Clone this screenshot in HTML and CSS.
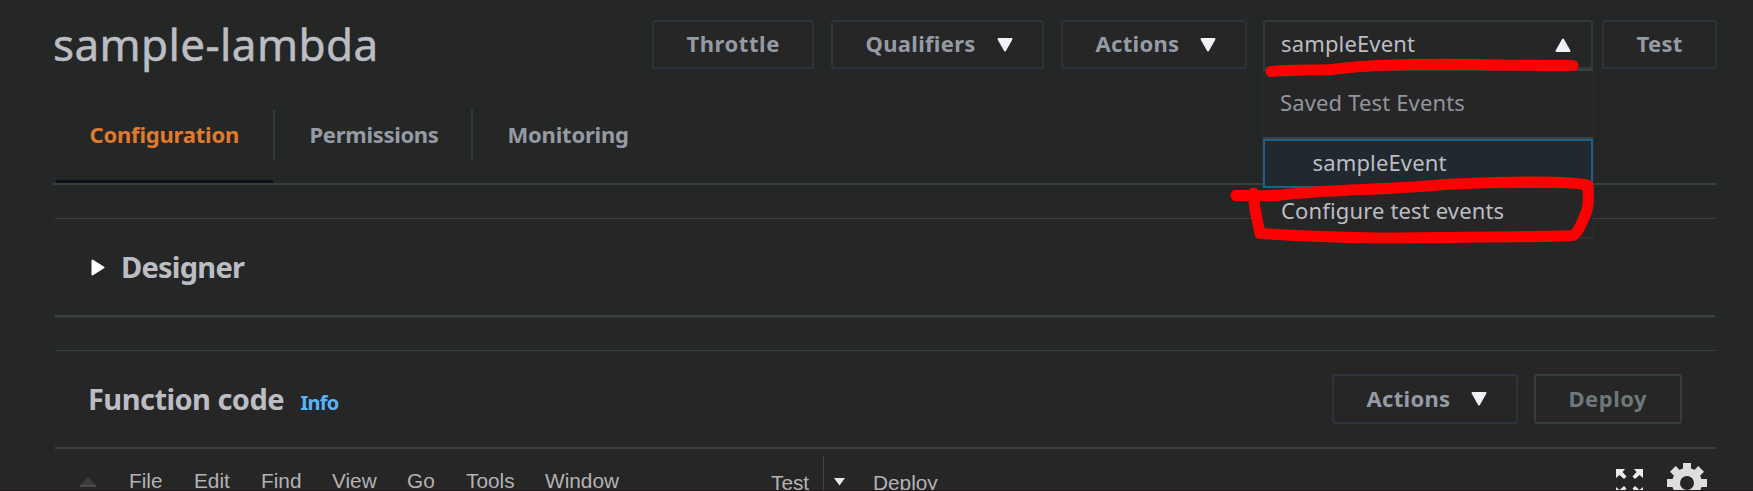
FILE: index.html
```html
<!DOCTYPE html>
<html lang="en">
<head>
<meta charset="utf-8">
<title>sample-lambda</title>
<link rel="stylesheet" href="styles.css">
</head>
<body>
<div class="page">
  <header class="header">
    <h1 class="title">sample-lambda</h1>
    <div class="actions">
      <button class="btn throttle"><span>Throttle</span></button>
      <button class="btn qualifiers"><span>Qualifiers</span><svg class="caret" viewBox="0 0 16 14"><path d="M1.500 1h13L8 12.500z"/></svg></button>
      <button class="btn menu"><span>Actions</span><svg class="caret" viewBox="0 0 16 14"><path d="M1.500 1h13L8 12.500z"/></svg></button>
      <div class="select">
        <span class="value">sampleEvent</span>
        <svg class="caret" viewBox="0 0 16 14"><path d="M1.500 13h13L8 1.500z"/></svg>
        <div class="dropdown">
          <div class="group"><span>Saved Test Events</span></div>
          <div class="option selected"><span>sampleEvent</span></div>
          <div class="option"><span>Configure test events</span></div>
        </div>
      </div>
      <button class="btn test"><span>Test</span></button>
    </div>
  </header>
  <nav class="tabs">
    <a class="tab active"><span>Configuration</span></a>
    <a class="tab permissions"><span>Permissions</span></a>
    <a class="tab monitoring"><span>Monitoring</span></a>
  </nav>
  <section class="panel designer">
    <svg class="arrow" viewBox="0 0 14 17"><path d="M1.500 1.500v14L12.500 8.500z"/></svg>
    <h2>Designer</h2>
  </section>
  <section class="panel code">
    <div class="code-head">
      <h2>Function code</h2>
      <a class="info">Info</a>
      <button class="btn menu code-menu"><span>Actions</span><svg class="caret" viewBox="0 0 16 14"><path d="M1.500 1h13L8 12.500z"/></svg></button>
      <button class="btn deploy"><span>Deploy</span></button>
    </div>
    <div class="ide">
      <svg class="collapse" viewBox="0 0 16 10"><path fill="#3c3c3c" d="M8 0l8 8H0z"/><path fill="#4c4c4c" d="M0 8h16v2H0z"/></svg>
      <div class="ide-menu"><span class="m-file">File</span><span class="m-edit">Edit</span><span class="m-find">Find</span><span class="m-view">View</span><span class="m-go">Go</span><span class="m-tools">Tools</span><span>Window</span></div>
      <div class="ide-run"><span class="run-test">Test</span><svg class="run-caret" viewBox="0 0 12 8"><path d="M0 0h11L5.500 7.500z"/></svg><span>Deploy</span></div>
      <svg class="expand" viewBox="0 0 27 27"><g id="c"><path d="M0 0h9L6.500 3l4 4.500-2.500 2.500-4.500-4L0 9z"/></g><use href="#c" transform="matrix(-1 0 0 1 27 0)"/><use href="#c" transform="matrix(1 0 0 -1 0 27)"/><use href="#c" transform="rotate(180 13.500 13.500)"/></svg>
      <svg class="gear" viewBox="-20 -20 40 40"><circle r="11" fill="none" stroke="#dedede" stroke-width="8"/><g id="t"><path d="M-4-20h8v7h-8z"/><path d="M-4-20h8v7h-8z" transform="rotate(45)"/></g><use href="#t" transform="rotate(90)"/><use href="#t" transform="rotate(180)"/><use href="#t" transform="rotate(270)"/></svg>
    </div>
  </section>
</div>
<svg class="marker" viewBox="0 0 1753 491">
  <path d="M1271 71.500C1290 69.500 1320 70.500 1332 69.500C1345 68 1355 66.500 1375 65.800C1410 64.300 1470 64.300 1500 65C1530 65.500 1550 65.500 1573 65.500"/>
  <path d="M1236 195.500C1255 195 1272 197 1290 194C1330 190 1400 189 1445 184.500C1490 182 1570 180 1588 185.500C1589 205 1588 210 1583 220C1580 226 1579 232 1573 235.500C1540 237 1450 237.500 1390 238C1340 238 1290 235 1260 233.500C1258 220 1254 214 1253.500 193"/>
</svg>
</body>
</html>
```
FILE: styles.css
```css
* { box-sizing: border-box; }
body { margin: 0; background: #252726; font-family: "Noto Sans", sans-serif; color: #bbbdc3; }
.page { height: 491px; overflow: hidden; padding: 20px 36px 0 53px; border-bottom: 1px solid #201c1e; }
span, h1, h2, a { white-space: nowrap; }
svg { display: block; flex: none; }
.header { display: flex; justify-content: space-between; height: 90px; }
.title { margin: 0; font-size: 44px; font-weight: 400; line-height: 48px; letter-spacing: 0.4px; -webkit-text-stroke: 0.5px #bbbdc3; }
.actions { display: flex; align-items: flex-start; }
.btn { display: flex; align-items: center; justify-content: flex-start; height: 49px; padding: 0 0 0 32.500px; border: 2px solid #2d333c; border-radius: 3px; background: #262626; color: #959ba5; font: 700 22px/30px "Noto Sans", sans-serif; letter-spacing: 0.3px; }
.btn span { padding-bottom: 3px; }
.caret { width: 16px; height: 14px; fill: #f2f3f8; stroke: #f2f3f8; stroke-width: 2; stroke-linejoin: round; }
.btn .caret { margin-left: auto; margin-right: 29.500px; }
.throttle { width: 162px; margin-right: 17px; letter-spacing: 0.55px; }
.qualifiers { width: 213px; margin-right: 17px; }
.menu { width: 186px; margin-right: 16px; }
.select { position: relative; display: flex; align-items: center; justify-content: space-between; width: 330px; height: 49px; margin-right: 9px; padding: 0 20.500px 0 16px; border: 2px solid #303b3c; border-radius: 3px; background: #262626; font-size: 22px; line-height: 30px; letter-spacing: 0.15px; }
.value { padding-bottom: 3px; }
.dropdown { position: absolute; top: 47px; left: -2px; width: 330px; height: 168px; background: #262626; border-top: 2px solid #3a3f3f; box-shadow: 0 1px 2px #304044; }
.group { height: 68px; padding: 16px 0 0 17px; border-bottom: 2px solid #3e4040; color: #92959d; }
.option { height: 49px; padding: 7px 0 0 18px; }
.option.selected { padding: 6px 0 0 47.500px; border: 2px solid #1d5f88; background: #21282e; }
.test { width: 115px; }
.tabs { display: flex; height: 75px; border-bottom: 2px solid #334040; font-size: 22px; font-weight: 700; line-height: 48px; letter-spacing: -0.2px; color: #959ba5; }
.tab { height: 50px; border-right: 2px solid #303b3d; padding-left: 34.500px; }
.tab.active { position: relative; width: 222px; padding-left: 36.500px; color: #e07a2e; }
.tab.active::after { content: ""; position: absolute; left: 3px; top: 70px; width: 217px; height: 3px; background: #0f1019; }
.permissions { width: 198px; letter-spacing: -0.3px; }
.monitoring { border: 0; }
.panel { width: 1660px; margin-left: 2px; background: #262626; border-top: 1px solid #3a4141; box-shadow: 0 1px 1px #2c3738; }
h2 { margin: 0; font-size: 29px; line-height: 40px; letter-spacing: -0.55px; }
.designer { display: flex; align-items: center; height: 99px; margin-top: 33px; padding-left: 36px; border-bottom: 2px solid #3a4041; }
.arrow { width: 14px; height: 17px; fill: #fff; stroke: #fff; stroke-width: 2; stroke-linejoin: round; }
.designer h2 { margin-left: 16px; letter-spacing: -0.75px; }
.code { height: 160px; margin-top: 33px; }
.code-head { display: flex; align-items: center; height: 98px; padding: 0 33px 0 33px; border-bottom: 2px solid #3a4141; }
.info { margin: 8px 0 0 16.500px; font-size: 20px; line-height: 28px; font-weight: 700; letter-spacing: -0.7px; color: #56b4f8; }
.code-menu { margin-left: auto; }
.code-head .btn { height: 50px; }
.deploy { width: 148px; border-color: #353d3d; color: #6c7879; letter-spacing: 0.5px; }
.ide { display: flex; font: 20.800px/24px "Liberation Sans", Arial, sans-serif; color: #b3b3b3; }
.collapse { width: 16px; height: 10px; margin: 28px 33px 0 25px; }
.ide-menu { display: flex; width: 642px; padding-top: 20px; }
.m-file { width: 65px; } .m-edit { width: 67px; } .m-find { width: 71px; } .m-view { width: 75px; } .m-go { width: 59px; } .m-tools { width: 79px; }
.ide-run { display: flex; padding-top: 7px; line-height: 53px; }
.run-test { width: 53px; height: 40px; border-right: 1px solid #404343; }
.run-caret { width: 12px; height: 8px; margin: 22px 27px 0 10px; fill: #e8e8e8; }
.expand { width: 27px; height: 27px; margin: 20px 24px 0 auto; fill: #ececec; }
.gear { width: 40px; height: 40px; margin: 13.500px 8.500px 0 0; fill: #dedede; }
.marker { position: absolute; left: 0; top: 0; width: 1753px; height: 491px; fill: none; stroke: #f00; stroke-width: 11; stroke-linecap: round; stroke-linejoin: round; pointer-events: none; }
```
